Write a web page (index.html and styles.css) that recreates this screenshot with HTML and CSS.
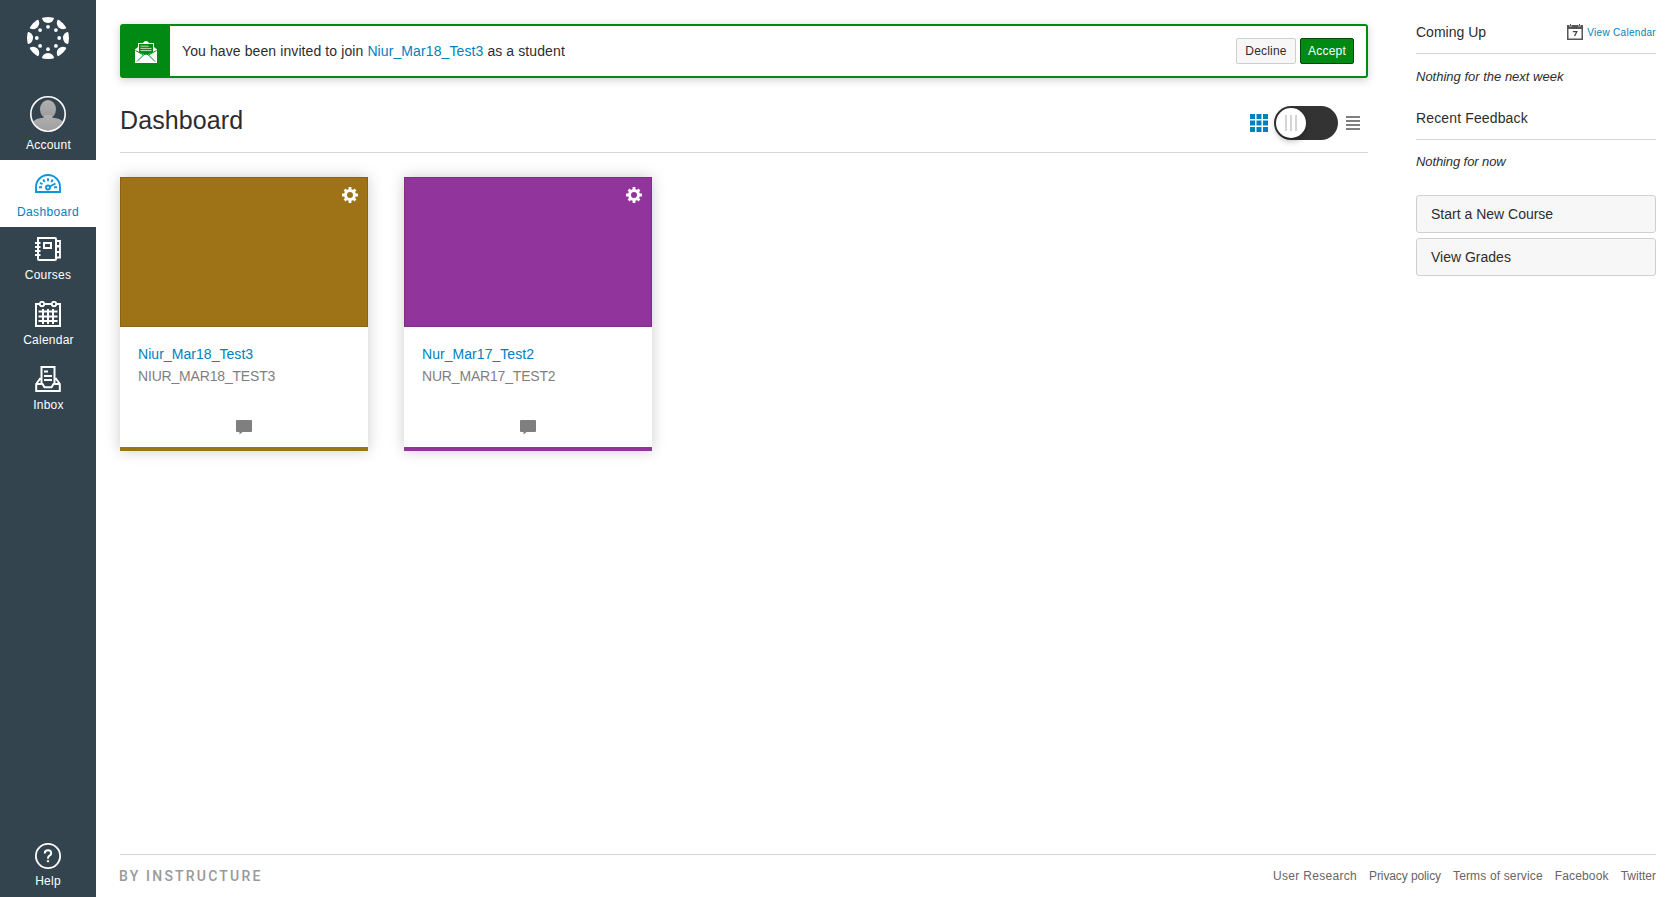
FILE: index.html
```html
<!DOCTYPE html>
<html lang="en">
<head>
<meta charset="utf-8">
<title>Dashboard</title>
<link rel="stylesheet" href="styles.css">
</head>
<body>
<div class="app">
  <nav class="sidebar">
    <a class="logo">
      <svg width="42" height="42" viewBox="-21 -21 42 42" fill="#fff">
        <defs>
          <clipPath id="ring"><circle r="21"/></clipPath>
          <g id="petal"><ellipse cy="-21" rx="6.200" ry="6"/></g>
        </defs>
        <g clip-path="url(#ring)">
          <use href="#petal"/><use href="#petal" transform="rotate(45)"/><use href="#petal" transform="rotate(90)"/><use href="#petal" transform="rotate(135)"/>
          <use href="#petal" transform="rotate(180)"/><use href="#petal" transform="rotate(225)"/><use href="#petal" transform="rotate(270)"/><use href="#petal" transform="rotate(315)"/>
        </g>
        <circle cy="-11.2" r="1.9"/><circle cy="11.2" r="1.9"/><circle cx="-11.2" r="1.9"/><circle cx="11.2" r="1.9"/>
        <circle cx="-7.9" cy="-7.9" r="1.9"/><circle cx="7.9" cy="-7.9" r="1.9"/><circle cx="-7.9" cy="7.9" r="1.9"/><circle cx="7.9" cy="7.9" r="1.9"/>
      </svg>
    </a>
    <a class="nav-item account">
      <svg width="36" height="36" viewBox="0 0 36 36">
        <defs>
          <clipPath id="face"><circle cx="18" cy="18" r="16.5"/></clipPath>
          <linearGradient id="skin" x1="0" y1="0" x2="0" y2="1"><stop offset="0" stop-color="#b0b0b0"/><stop offset="1" stop-color="#9c9c9c"/></linearGradient>
        </defs>
        <g clip-path="url(#face)" fill="url(#skin)">
          <ellipse cx="18" cy="13.3" rx="8" ry="9.3"/>
          <path d="M14 19h8v2.500c3 1 8 .3 12 5v11H2V26.500c4-4.700 9-4 12-5z"/>
        </g>
        <circle cx="18" cy="18" r="17.200" fill="none" stroke="#fff" stroke-width="1.600"/>
      </svg>
      <span>Account</span>
    </a>
    <a class="nav-item active">
      <svg width="26" height="20" viewBox="0 0 26 20" fill="none" stroke="#0b96dc" stroke-width="1.900">
        <path d="M1 18V13a12 12 0 0 1 24 0v5z"/>
        <circle cx="13" cy="13.500" r="2"/>
        <path d="M14.800 12.500 20.500 9.500M13 4.300v3M8.300 5.500l1.300 2.600M17.700 5.500l-1.300 2.600M5 8.800l2.500 1.500M4 13.300h3M19 13.300h3"/>
      </svg>
      <span>Dashboard</span>
    </a>
    <a class="nav-item courses">
      <svg width="26" height="24" viewBox="0 0 26 24" fill="none" stroke="#fff" stroke-width="2">
        <path d="M3 1h17q1 0 1 1v20q0 1-1 1H4Q3 23 3 22z"/>
        <path d="M0 6h5.500M0 10h5.500M0 14h5.500M0 18h5.500" stroke-width="1.800"/>
        <path d="M9 6h7v5H9z"/>
        <path d="M21 4h4v5h-4M21 9.500h4V15h-4M21 15h4v5.500h-4" stroke-width="1.800"/>
      </svg>
      <span>Courses</span>
    </a>
    <a class="nav-item">
      <svg width="26" height="26" viewBox="0 0 26 26" fill="none" stroke="#fff" stroke-width="2">
        <path d="M4 3H1v22h24V3h-3M9 3h8"/>
        <circle cx="7" cy="3" r="2.200" stroke-width="1.900"/><circle cx="19" cy="3" r="2.200" stroke-width="1.900"/>
        <path d="M3.500 10.500h19M3.500 15.500h19M3.500 20h19M8 8v15M13 8v15M18 8v15" stroke-width="2"/>
      </svg>
      <span>Calendar</span>
    </a>
    <a class="nav-item">
      <svg width="26" height="26" viewBox="0 0 26 26" fill="none" stroke="#fff" stroke-width="2">
        <path d="M6.500 17V1h13v16M5.500 12 1.200 18v7h23.600v-7l-4.300-6M1.200 18h6.300l2 3.200h7l2-3.200h6.300"/>
        <path d="M9 5.500h4M9 10h8M9 14h8" stroke-width="1.900"/>
      </svg>
      <span>Inbox</span>
    </a>
    <a class="nav-item help">
      <svg width="26" height="26" viewBox="0 0 26 26" fill="none" stroke="#fff">
        <circle cx="13" cy="13" r="12.100" stroke-width="1.800"/>
        <path d="M9.800 10.500q0-3.200 3.200-3.200t3.200 2.900q0 1.600-1.700 2.500-1.500.9-1.500 2.500v.6" stroke-width="2"/>
        <path d="M13 17.200v2" stroke-width="2.200"/>
      </svg>
      <span>Help</span>
    </a>
  </nav>

  <div class="page">
    <div class="columns">
      <main class="content">
        <section class="invite">
          <div class="invite-icon">
            <svg width="22" height="22" viewBox="0 0 22 22">
              <path fill="#fff" d="M0 8.500 3 6V2h5q1-2 3-2t3 2h5v4l3 2.500V22H0z"/>
              <path fill="#008a14" d="M4 3h14v8.300L13.800 13H8.200L4 11.500z"/>
              <path d="M5.500 5.200h8M5.500 7.400h11M5.500 9.600h11" stroke="#b9e0be" stroke-width="1"/>
              <path d="M.5 9.500 8.500 14 2 20.500M21.500 9.500 13.500 14 20 20.500M8.500 13.800q2.500-1.500 5 0" fill="none" stroke="#008a14" stroke-width="1"/>
            </svg>
          </div>
          <p class="invite-text">You have been invited to join <a>Niur_Mar18_Test3</a> as a student</p>
          <button class="btn">Decline</button>
          <button class="btn accept">Accept</button>
        </section>

        <header class="heading">
          <h1>Dashboard</h1>
          <div class="view-switch">
            <svg width="18" height="18" viewBox="0 0 18 18" fill="#0081bd"><path d="M0 0h5v5H0zM6.500 0h5v5h-5zM13 0h5v5h-5zM0 6.500h5v5H0zM6.500 6.500h5v5h-5zM13 6.500h5v5h-5zM0 13h5v5H0zM6.500 13h5v5h-5zM13 13h5v5h-5z"/></svg>
            <div class="toggle"><div class="knob"><i></i><i></i><i></i></div></div>
            <svg width="14" height="14" viewBox="0 0 14 14" fill="#7f7f7f"><path d="M0 0h14v2H0zM0 4h14v2H0zM0 8h14v2H0zM0 12h14v2H0z"/></svg>
          </div>
        </header>

        <section class="cards">
          <article class="card brown">
            <div class="hero">
              <svg width="16" height="16" viewBox="-8 -8 16 16" fill="none" stroke="#fff"><circle r="4.500" stroke-width="3"/><path d="M0-8v3M0 8V5M-8 0h3M8 0H5M-5.400-5.400l1.800 1.800M5.400-5.400l-1.800 1.800M-5.400 5.400l1.800-1.800M5.400 5.400l-1.800-1.800" stroke-width="2.800"/></svg>
            </div>
            <div class="card-body"><a>Niur_Mar18_Test3</a><p>NIUR_MAR18_TEST3</p></div>
            <svg class="comment" width="16" height="14" viewBox="0 0 16 14"><path fill="#7f7f7f" d="M1 0h14q1 0 1 1v10q0 1-1 1H6.500L3.500 14.500V12H1q-1 0-1-1V1q0-1 1-1z"/></svg>
          </article>
          <article class="card purple">
            <div class="hero">
              <svg width="16" height="16" viewBox="-8 -8 16 16" fill="none" stroke="#fff"><circle r="4.500" stroke-width="3"/><path d="M0-8v3M0 8V5M-8 0h3M8 0H5M-5.400-5.400l1.800 1.800M5.400-5.400l-1.800 1.800M-5.400 5.400l1.800-1.800M5.400 5.400l-1.800-1.800" stroke-width="2.800"/></svg>
            </div>
            <div class="card-body"><a>Nur_Mar17_Test2</a><p>NUR_MAR17_TEST2</p></div>
            <svg class="comment" width="16" height="14" viewBox="0 0 16 14"><path fill="#7f7f7f" d="M1 0h14q1 0 1 1v10q0 1-1 1H6.500L3.500 14.500V12H1q-1 0-1-1V1q0-1 1-1z"/></svg>
          </article>
        </section>
      </main>

      <aside class="aside">
        <div class="aside-head">
          <h2>Coming Up</h2>
          <a class="cal-link">
            <svg width="16" height="16" viewBox="0 0 16 16"><path fill="#555" fill-rule="evenodd" d="M0 1h2.500v1.500h2V1h7v1.500h2V1H16v15H0zM1.500 5v9.500h13V5z"/><path d="M3.500 0v2M12.500 0v2" stroke="#555"/><path d="M5.800 7.700h4L7.600 12" fill="none" stroke="#444" stroke-width="1.300"/></svg>
            <span>View Calendar</span>
          </a>
        </div>
        <p class="empty">Nothing for the next week</p>
        <div class="aside-head feedback"><h2>Recent Feedback</h2></div>
        <p class="empty now">Nothing for now</p>
        <div class="actions">
          <button class="wide">Start a New Course</button>
          <button class="wide grades">View Grades</button>
        </div>
      </aside>
    </div>

    <footer class="footer">
      <span class="brand">BY INSTRUCTURE</span>
      <div class="links"><a class="research">User Research</a><a class="privacy">Privacy policy</a><a>Terms of service</a><a>Facebook</a><a class="twitter">Twitter</a></div>
    </footer>
  </div>
</div>
</body>
</html>
```
FILE: styles.css
```css
* { box-sizing: border-box; }
body { margin: 0; background: #fff; color: #2d2d2d; font: 14px/20px "Liberation Sans", Arial, sans-serif; }
h1, h2, p { margin: 0; font-weight: normal; }
h2 { font-size: 14px; line-height: 20px; }
svg { display: block; flex: none; }
button { font-family: inherit; color: #2d2d2d; margin: 0; cursor: pointer; }
a { color: #0081bd; text-decoration: none; }

.app { display: flex; height: 897px; overflow: hidden; }

.sidebar { width: 96px; flex: none; background: #34444f; display: flex; flex-direction: column; }
.logo { display: flex; justify-content: center; padding-top: 17px; height: 90px; }
.nav-item { display: flex; flex-direction: column; align-items: center; height: 65px; padding-top: 7px; color: #fff; font-size: 12px; line-height: 16px; letter-spacing: .25px; white-space: nowrap; }
.nav-item span { margin-top: 5px; padding-left: 1px; }
.nav-item.account { height: 70px; padding-top: 6px; }
.nav-item.active { height: 67px; padding-top: 14px; background: #fff; color: #0081bd; letter-spacing: .35px; }
.nav-item.active span { margin-top: 10px; padding-left: 0; }
.nav-item.courses { height: 67px; padding-top: 10px; }
.nav-item.courses span { margin-top: 6px; padding-left: 0; }
.nav-item.help { margin-top: auto; height: 61px; }
.nav-item.help span { margin-top: 4px; padding-left: 0; }

.page { flex: 1; display: flex; flex-direction: column; padding: 0 24px; }
.columns { flex: 1; display: flex; justify-content: space-between; }
.content { width: 1248px; padding-top: 24px; }

.invite { display: flex; align-items: center; height: 54px; border: 2px solid #008a14; border-radius: 3px; padding-right: 12px; box-shadow: 0 2px 8px rgba(0,0,0,.2); }
.invite-icon { width: 48px; height: 50px; background: #008a14; display: flex; align-items: center; justify-content: center; padding-top: 2px; }
.invite-text { flex: 1; padding-left: 12px; letter-spacing: .1px; }
.btn { height: 26px; width: 60px; padding: 0; margin-left: 4px; border: 1px solid #d0d0d0; border-radius: 2px; background: #f7f7f7; font-size: 12px; line-height: 16px; letter-spacing: .2px; }
.btn.accept { width: 54px; background: #008a14; border-color: #004d0b; color: #fff; }

.heading { display: flex; justify-content: space-between; height: 75px; border-bottom: 1px solid #d6d6d6; padding: 28px 8px 0 0; }
h1 { font-size: 25px; line-height: 29px; letter-spacing: .1px; }
.view-switch { display: flex; align-items: center; gap: 6px; height: 34px; }
.view-switch svg:last-child { margin-left: 2px; }
.toggle { width: 64px; height: 34px; border-radius: 17px; background: #333; padding: 2px; }
.knob { width: 30px; height: 30px; border-radius: 50%; background: #fff; display: flex; justify-content: center; align-items: center; gap: 3px; box-shadow: 0 3px 6px rgba(0,0,0,.3); }
.knob i { width: 2px; height: 16px; background: #d5d5d5; }

.cards { display: flex; gap: 36px; padding-top: 24px; }
.card { width: 248px; height: 274px; border-bottom: 4px solid; box-shadow: 0 0 14px rgba(0,0,0,.2); display: flex; flex-direction: column; align-items: center; background: #fff; }
.card.brown { border-color: #9e7217; }
.card.purple { border-color: #91349b; }
.hero { align-self: stretch; height: 150px; display: flex; justify-content: flex-end; padding: 9px; border: 1px solid rgba(0,0,0,.12); }
.brown .hero { background: #9e7217; }
.purple .hero { background: #91349b; }
.card-body { align-self: stretch; height: 93px; padding: 17px 18px 0; }
.card-body a { display: block; height: 22px; letter-spacing: .05px; }
.card-body p { color: #7f7f7f; letter-spacing: -.18px; }
.comment { overflow: visible; }

.aside { width: 240px; padding-top: 22px; }
.aside-head { display: flex; justify-content: space-between; height: 32px; border-bottom: 1px solid #d6d6d6; }
.cal-link { display: flex; gap: 4px; padding-top: 2px; font-size: 10px; line-height: 18px; letter-spacing: .3px; white-space: nowrap; }
.empty { font-style: italic; font-size: 13px; padding-top: 13px; }
.feedback { margin-top: 21px; }
.feedback h2 { letter-spacing: .14px; }
.empty.now { padding-top: 12px; letter-spacing: -.1px; }
.actions { display: flex; flex-direction: column; gap: 5px; padding-top: 23px; }
.wide { height: 38px; border: 1px solid #d0d0d0; border-radius: 3px; background: #f7f7f7; text-align: left; padding: 0 14px; font-size: 14px; line-height: 20px; }

.footer { display: flex; justify-content: space-between; height: 43px; border-top: 1px solid #d6d6d6; padding-top: 13px; }
.brand { margin-left: -1px; font-family: Roboto, sans-serif; font-weight: 500; font-size: 14px; line-height: 16px; letter-spacing: 2.200px; color: #999; }
.links { display: flex; gap: 12px; font-size: 12px; line-height: 16px; letter-spacing: .15px; }
.links a { color: #666; }
.links .research { letter-spacing: .31px; }
.links .privacy { letter-spacing: -.1px; }
.links .twitter { letter-spacing: 0; }
```
